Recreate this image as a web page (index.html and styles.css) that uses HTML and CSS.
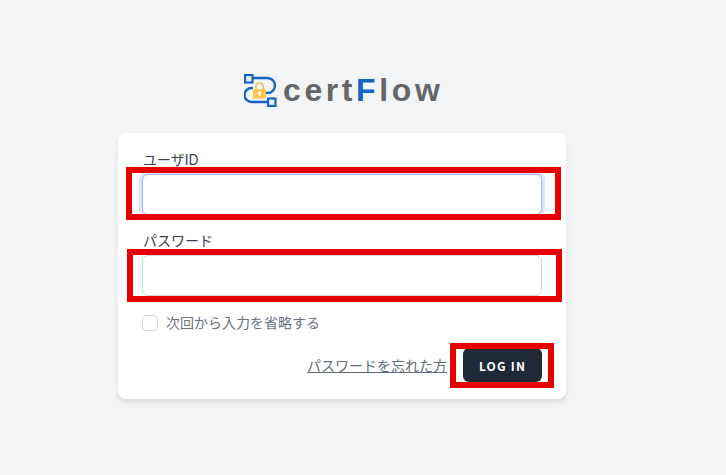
FILE: index.html
```html
<!DOCTYPE html>
<html lang="ja">
  <head>
    <meta charset="UTF-8" />
    <meta name="viewport" content="width=device-width, initial-scale=1.0" />
    <title>certFlow</title>
    <link rel="stylesheet" href="styles.css">
  </head>
  <body>
    <main class="page">
      <div class="logo">
        <svg class="logo-icon" width="33" height="33" viewBox="0 0 33 33" fill="none">
          <path d="M9 4H23.5a7.5 7.5 0 0 1 0 15H22" stroke="#1565c0" stroke-width="2.4" />
          <path d="M9 14H7.5a7 7 0 0 0 0 14H24" stroke="#1565c0" stroke-width="2.4" />
          <rect x="1" y="1" width="7.5" height="7.5" fill="#e8eef8" stroke="#1565c0" stroke-width="2.2" />
          <rect x="24" y="24.5" width="7.5" height="7.5" fill="#e8eef8" stroke="#1565c0" stroke-width="2.2" />
          <path d="M12 15v-2.5a3.6 3.6 0 0 1 7.2 0V15" stroke="#f5c05a" stroke-width="1.8" />
          <rect x="9" y="15" width="13" height="9.5" rx="1" fill="#fdc752" />
          <circle cx="15.5" cy="18.7" r="1.5" fill="#fff" />
          <rect x="14.9" y="19" width="1.3" height="3" fill="#fff" />
        </svg>
        <div class="logo-text">cert<span class="logo-f">F</span>low</div>
      </div>

      <form class="card">
        <div class="field">
          <label class="label">ユーザID</label>
          <input class="input focused" type="text" />
        </div>
        <div class="field">
          <label class="label">パスワード</label>
          <input class="input" type="password" />
        </div>
        <label class="remember">
          <span class="checkbox"></span>
          <span class="remember-text">次回から入力を省略する</span>
        </label>
        <div class="actions">
          <a class="forgot" href="#">パスワードを忘れた方</a>
          <button class="login" type="button">LOG IN</button>
        </div>

        <!-- red highlight frames -->
        <div class="mark mark-user"></div>
        <div class="mark mark-pass"></div>
        <div class="mark mark-login"></div>
      </form>
    </main>
  </body>
</html>
```

FILE: styles.css
```css
* {
  box-sizing: border-box;
}

body {
  margin: 0;
  background: #f3f4f6;
  font-family: Inter, "Noto Sans CJK JP", sans-serif;
  min-height: 100vh;
  overflow: hidden;
}

.page {
  width: 448px;
  margin-left: 118px;
  padding-top: 72px;
}

.logo {
  display: flex;
  align-items: center;
  gap: 6px;
  height: 37px;
  margin-bottom: 24px;
  padding-left: 126px;
}

.logo-text {
  font-family: "Liberation Sans", Arial, sans-serif;
  font-weight: bold;
  font-size: 32px;
  letter-spacing: 3.6px;
  color: #666;
  line-height: 37px;
}

.logo-f {
  color: #1565c0;
}

.card {
  position: relative;
  background: #fff;
  border-radius: 8px;
  padding: 17px 24px 16px;
  height: 266px;
  box-shadow: 0 4px 6px -1px rgba(0, 0, 0, 0.1), 0 2px 4px -1px rgba(0, 0, 0, 0.06);
}

.field {
  margin-bottom: 16px;
}

.label {
  display: block;
  font-size: 14px;
  line-height: 20px;
  color: #374151;
  padding-left: 1px;
}

.input {
  display: block;
  width: 100%;
  height: 41px;
  margin-top: 4px;
  border: 1px solid #d1d5db;
  border-radius: 6px;
  background: #fff;
  outline: none;
}

.input.focused {
  border-color: #a4b4fc;
  box-shadow: 0 0 0 3px rgba(164, 180, 252, 0.4);
}

.remember {
  display: flex;
  align-items: center;
  gap: 8px;
  height: 20px;
  font-size: 14px;
  line-height: 20px;
  color: #6b7280;
}

.remember-text {
  padding-top: 1px;
}

.checkbox {
  width: 16px;
  height: 16px;
  margin-top: 2px;
  border: 1px solid #d1d5db;
  border-radius: 4px;
  background: #fff;
}

.actions {
  display: flex;
  justify-content: flex-end;
  align-items: center;
  gap: 16px;
  margin-top: 16px;
}

.forgot {
  font-size: 14px;
  color: #636b78;
  text-decoration: underline;
}

.login {
  width: 79px;
  height: 34px;
  border: none;
  border-radius: 6px;
  background: #1f2937;
  color: #fff;
  font-family: "Noto Sans CJK JP", sans-serif;
  font-size: 12px;
  font-weight: 700;
  letter-spacing: 1.2px;
}

.mark {
  position: absolute;
  border: 6px solid #e60000;
  pointer-events: none;
}

.mark-user {
  left: 8px;
  top: 34px;
  width: 435px;
  height: 53px;
}

.mark-pass {
  left: 9px;
  top: 116px;
  width: 435px;
  height: 53px;
}

.mark-login {
  left: 332px;
  top: 210px;
  width: 104px;
  height: 45px;
}
```
